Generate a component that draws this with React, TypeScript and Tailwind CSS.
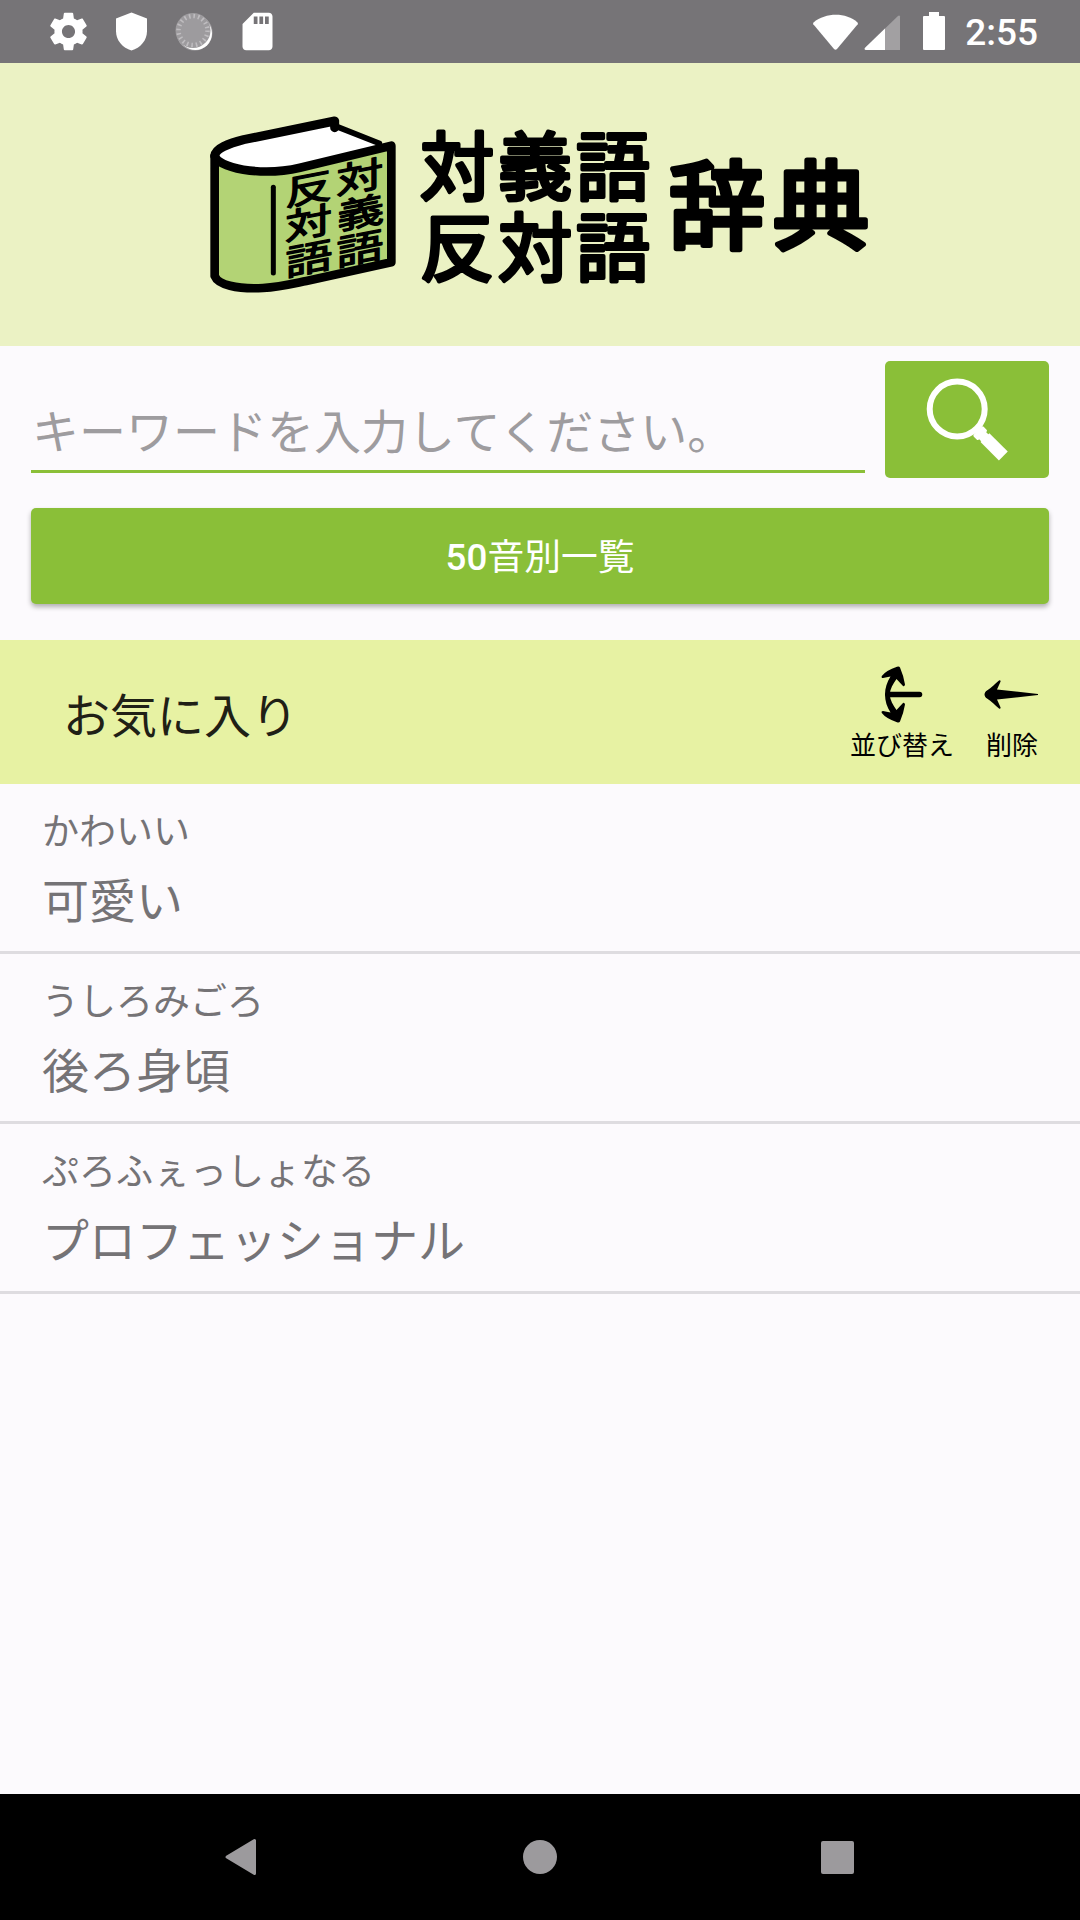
import { useState } from 'react';
import { MdSdCard } from 'react-icons/md';

const favorites = [
  { kana: 'かわいい', word: '可愛い' },
  { kana: 'うしろみごろ', word: '後ろ身頃' },
  { kana: 'ぷろふぇっしょなる', word: 'プロフェッショナル' },
];

function StatusBar() {
  return (
    <div className="h-[63px] bg-[#767477] text-white flex items-center justify-between pl-[46px] pr-[42px]">
      <div className="flex items-center gap-[18px]">
        <svg viewBox="0 0 24 24" className="w-[45px] h-[45px]" fill="currentColor">
          <path d="M19.43 12.98c.04-.32.07-.64.07-.98s-.03-.66-.07-.98l2.11-1.65c.19-.15.24-.42.12-.64l-2-3.46c-.12-.22-.39-.3-.61-.22l-2.49 1c-.52-.4-1.08-.73-1.69-.98l-.38-2.65C14.46 2.18 14.25 2 14 2h-4c-.25 0-.46.18-.49.42l-.38 2.65c-.61.25-1.17.59-1.69.98l-2.49-1c-.23-.09-.49 0-.61.22l-2 3.46c-.13.22-.07.49.12.64l2.11 1.65c-.04.32-.07.65-.07.98s.03.66.07.98l-2.11 1.65c-.19.15-.24.42-.12.64l2 3.46c.12.22.39.3.61.22l2.49-1c.52.4 1.08.73 1.69.98l.38 2.65c.03.24.24.42.49.42h4c.25 0 .46-.18.49-.42l.38-2.65c.61-.25 1.17-.59 1.69-.98l2.49 1c.23.09.49 0 .61-.22l2-3.46c.12-.22.07-.49-.12-.64l-2.11-1.65zM12 15.5c-1.93 0-3.5-1.57-3.5-3.5s1.57-3.5 3.5-3.5 3.5 1.57 3.5 3.5-1.57 3.5-3.5 3.5z" />
        </svg>
        <svg viewBox="0 0 45 45" className="w-[45px] h-[45px]" fill="currentColor">
          <path d="M22.5 3.5 7 9.5v12.7c0 9.2 6.6 16.6 15.5 19.3C31.4 38.8 38 31.4 38 22.2V9.5z" />
        </svg>
        <svg viewBox="0 0 45 45" className="w-[45px] h-[45px]">
          <circle cx="22.5" cy="23.5" r="18" fill="#a5a3a6" />
          <circle cx="23.5" cy="24.5" r="16.5" fill="#fff" />
          <circle cx="21" cy="21.5" r="17.5" fill="#9d9b9e" />
          <circle cx="21" cy="21.5" r="14.5" fill="none" stroke="#bfbdc0" strokeWidth="4.5" strokeDasharray="1.6 2.955" />
        </svg>
        <MdSdCard className="w-[45px] h-[45px]" />
      </div>
      <div className="flex items-center">
        <svg viewBox="0 0 135 40" className="w-[135px] h-[40px] mr-[18px]" fill="currentColor">
          <path d="M1.5 10.5C14 .3 34 .3 45.5 10.5q.8.8.2 1.7L25 37q-1.5 1.3-3 0L1.3 12.2q-.6-.9.2-1.7z" />
          <path d="M88 4.5V38H54c-1.5 0-1.8-1.2-.9-2.2L86 4q1.5-1 2 .5z" opacity=".32" />
          <path d="M73 16.5V38H54c-1.5 0-1.8-1.2-.9-2.2z" />
          <path d="M117 0h10v4h5q1 0 1 1v32q0 1-1 1h-20q-1 0-1-1V5q0-1 1-1h5z" />
        </svg>
        <span className="font-[Roboto] font-medium text-[37px] leading-none pt-[2px]">2:55</span>
      </div>
    </div>
  );
}

function Logo() {
  return (
    <svg viewBox="0 0 700 210" className="w-[700px] h-[210px]" fontFamily="'Noto Sans CJK JP', sans-serif">
      <g transform="scale(.33333)">
        <path d="M73 166v362c0 28 60 46 145 42 50-3 90-12 130-20l257-58V134L330 203c-60 15-120 14-170 6-50-9-80-24-87-43z" fill="#b3d375" />
        <path d="M74 166c3-20 40-35 86-45L436 58l2 22 140 50-250 72c-60 13-120 13-170 5-50-9-82-25-84-41z" fill="#fff" />
        <g fill="none" stroke="#000" strokeLinecap="round" strokeLinejoin="round">
          <path d="M74 168c3-24 42-37 87-49L434 63v20" strokeWidth="27" />
          <path d="M436 78l132 52" strokeWidth="17" />
          <path d="M74 168v360c10 26 65 40 145 36 50-3 90-13 130-21l255-56V137L330 203c-60 14-120 14-170 6-50-9-80-24-86-41z" strokeWidth="26" />
          <path d="M250 262v257" strokeWidth="15" />
        </g>
        <g fontSize="128" textAnchor="middle" stroke="#000" strokeWidth="5" strokeLinejoin="round">
          <text transform="translate(356 305) skewY(-11) scale(1.1 .82)">反</text>
          <text transform="translate(355 408) skewY(-11) scale(1.1 .82)">対</text>
          <text transform="translate(357 514) skewY(-11) scale(1.1 .82)">語</text>
          <text transform="translate(509 270) skewY(-11) scale(1.1 .82)">対</text>
          <text transform="translate(512 376) skewY(-11) scale(1.1 .82)">義</text>
          <text transform="translate(510 484) skewY(-11) scale(1.1 .82)">語</text>
        </g>
      </g>
      <g stroke="#000" strokeLinejoin="round" strokeWidth="4">
        <text x="230" y="94" fontSize="74" textLength="230">対義語</text>
        <text x="230" y="175" fontSize="74" textLength="230">反対語</text>
        <text x="479" y="141" fontSize="96" strokeWidth="5.5" textLength="200">辞典</text>
      </g>
    </svg>
  );
}

function SearchIcon() {
  return (
    <svg viewBox="0 0 164 117" className="w-[164px] h-[117px]">
      <circle cx="72.2" cy="48" r="27.5" fill="none" stroke="#fff" strokeWidth="6" />
      <g fill="#fff" transform="translate(92 69) rotate(45)">
        <rect x="-3" y="-3" width="7" height="6" />
        <rect x="1" y="-7" width="7" height="14" rx="1.5" />
        <rect x="7" y="-5" width="5" height="10" />
        <rect x="11" y="-6.5" width="26" height="12.5" />
      </g>
    </svg>
  );
}

function SortIcon() {
  return (
    <svg viewBox="-1 0 44 58" className="w-[44px] h-[58px]">
      <path d="M7 28.5h31.5" stroke="#000" strokeWidth="5.5" strokeLinecap="round" />
      <path d="M4 28.5C4 22 6 16 9.5 10.5L2 12Q0 12 .8 10 5 4.5 16 .8q2.3-.6 3 .7 3.5 8 5 17-.5 2.5-2 1.5L15.500 13C12 18 9 23 8.700 28.500 9 34 12 39 15.500 44l6.500-7q1.500-1 2 1.500-1.500 9-5 17-.7 1.300-3 .7Q5 52.500.8 47 0 45 2 45l7.500 1.500C6 41 4 35 4 28.500z" />
    </svg>
  );
}

function DeleteIcon() {
  return (
    <svg viewBox="1 0 54 58" className="w-[54px] h-[58px] overflow-visible">
      <path d="M.5 28.500c0-1.500 1-3 2.500-4C7.500 21.500 11 18 15 14.500q1.500-.7 1.600 1L13 23.500l41 4.500v1l-41 4.500 3.600 8q-.1 1.700-1.600 1C11 39 7.500 35.500 3 32.500 1.500 31.500.5 30 .5 28.500z" />
    </svg>
  );
}

export default function App() {
  const [keyword, setKeyword] = useState('');
  return (
    <div className="w-[1080px] h-[1920px] flex flex-col overflow-hidden bg-[#fcfafd] font-['Noto_Sans_CJK_JP',sans-serif]">
      <StatusBar />
      <header className="h-[283px] bg-[#ebf2c4] flex justify-center pt-[37px]">
        <Logo />
      </header>
      <div className="h-[294px] px-[31px] pt-[15px] flex flex-col gap-[30px]">
        <div className="flex justify-between">
          <input
            value={keyword}
            onChange={(e) => setKeyword(e.target.value)}
            placeholder="キーワードを入力してください。"
            className="w-[834px] h-[112px] pt-[26px] pl-[1px] border-b-[3px] border-[#8bbf38] outline-none text-[47px] text-[#222] placeholder:text-[#9e9c9f]"
          />
          <button className="w-[164px] h-[117px] rounded-[5px] bg-[#8abf38]"><SearchIcon /></button>
        </div>
        <button className="h-[96px] rounded-[5px] bg-[#8abf38] text-white text-[36.75px] shadow-[0_3px_5px_rgba(0,0,0,0.3)]">
          <span className="font-[Roboto] font-medium">50</span>音別一覧
        </button>
      </div>
      <div className="h-[144px] bg-[#e7f2a3] pl-[63px] pr-[41px] flex justify-between">
        <h1 className="text-[47px] leading-[144px] pt-[1px] text-[#1f2016]">お気に入り</h1>
        <div className="flex pt-[26px] gap-[31px] text-[26px] leading-[40px]">
          <button className="flex flex-col items-center"><SortIcon /><span>並び替え</span></button>
          <button className="flex flex-col items-center"><DeleteIcon /><span>削除</span></button>
        </div>
      </div>
      <ul className="flex-1 text-[#757376]">
        {favorites.map((item) => (
          <li key={item.word} className="h-[170px] border-b-[3px] border-[#dedce0] pl-[42px] pt-[18px]">
            <p className="text-[37px] leading-[54px]">{item.kana}</p>
            <p className="text-[47px] leading-[70px] mt-[7px]">{item.word}</p>
          </li>
        ))}
      </ul>
      <nav className="h-[126px] bg-black pl-[224px] pr-[226px] flex items-center justify-between">
        <svg viewBox="0 0 34 38" className="w-[34px] h-[38px]"><path d="M30.5 2.5v33L3 19z" fill="#9c9a9d" stroke="#9c9a9d" strokeWidth="3" strokeLinejoin="round" /></svg>
        <span className="w-[34px] h-[34px] rounded-full bg-[#9c9a9d]" />
        <span className="w-[33px] h-[33px] rounded-[2px] bg-[#9c9a9d]" />
      </nav>
    </div>
  );
}
